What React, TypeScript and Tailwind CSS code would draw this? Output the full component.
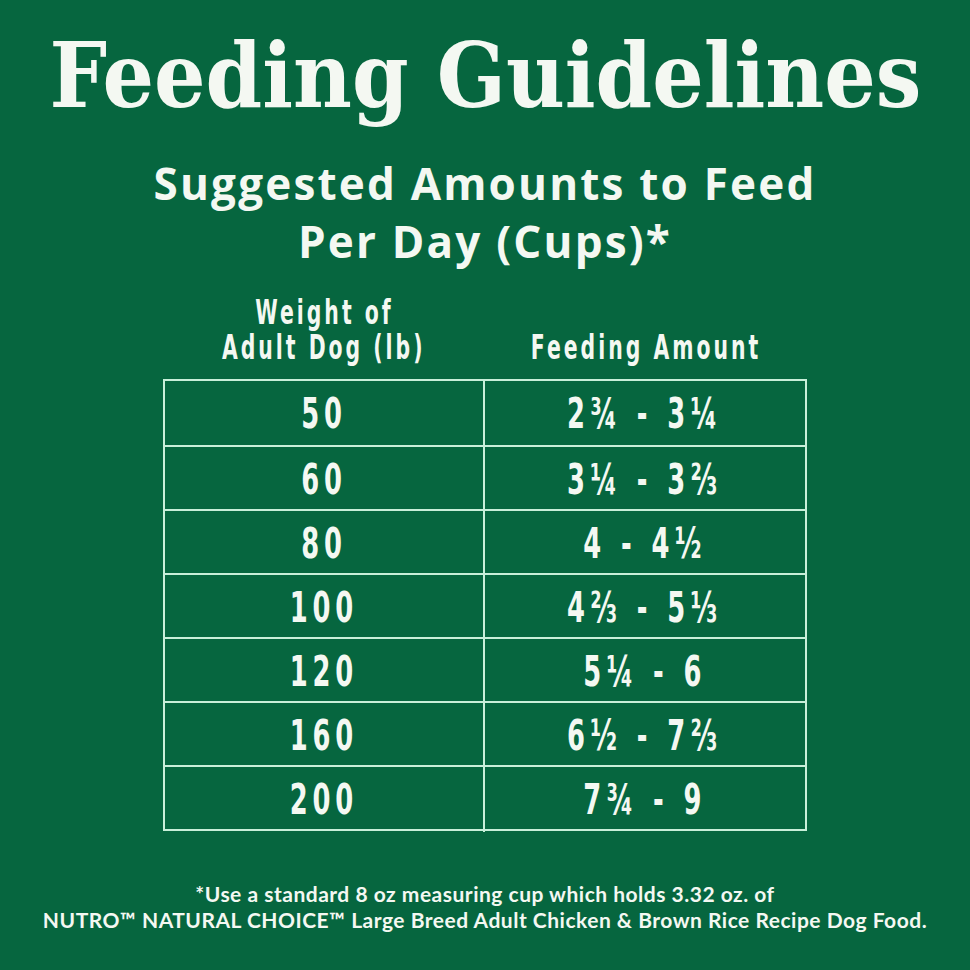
const ROWS: [string, string][] = [
  ['50', '2¾ - 3¼'],
  ['60', '3¼ - 3⅔'],
  ['80', '4 - 4½'],
  ['100', '4⅔ - 5⅓'],
  ['120', '5¼ - 6'],
  ['160', '6½ - 7⅔'],
  ['200', '7¾ - 9'],
];

// no condensed face is installed, so squeeze DejaVu Sans Bold horizontally
function Narrow({ children }: { children: React.ReactNode }) {
  return <span className="inline-block shrink-0 origin-center scale-x-[0.6] whitespace-pre">{children}</span>;
}

export default function App() {
  return (
    <div className="w-[970px] h-[970px] bg-[#06663f] text-[#f4f8f2] flex flex-col items-center overflow-hidden">
      <h1 className='mt-[20px] font-["DejaVu_Serif",serif] font-bold text-[90px] leading-[110px] whitespace-nowrap'>
        <span className="inline-block origin-center scale-x-[0.9]">Feeding Guidelines</span>
      </h1>
      <h2 className='mt-[24px] font-["Open_Sans",sans-serif] font-bold text-[44px] leading-[58px] tracking-[2.2px] text-center'>
        Suggested Amounts to Feed
        <br />
        Per Day (Cups)*
      </h2>

      <div className='font-["DejaVu_Sans",sans-serif] font-bold mt-[25px] w-[644px]'>
        <div className="grid grid-cols-[322px_322px] items-end pb-[14px] text-[34px] leading-[35px] tracking-[5px]">
          <div className="flex flex-col items-center">
            <Narrow>Weight of</Narrow>
            <Narrow>Adult Dog (lb)</Narrow>
          </div>
          <div className="flex flex-col items-center">
            <Narrow>Feeding Amount</Narrow>
          </div>
        </div>
        <div className="border-2 border-[#c8efd9]">
          {ROWS.map(([w, amt], i) => (
            <div
              key={w}
              className={`grid grid-cols-[320px_1fr] text-[43px] tracking-[8px] h-[64px] ${i > 0 ? 'border-t-2 border-[#c8efd9]' : ''}`}
            >
              <div className="flex items-center justify-center border-r-2 border-[#c8efd9]">
                <Narrow>{w}</Narrow>
              </div>
              <div className="flex items-center justify-center tracking-[9px]">
                <Narrow>{amt}</Narrow>
              </div>
            </div>
          ))}
        </div>
      </div>

      <p className='mt-[50px] font-["Lato",sans-serif] font-bold text-[21px] leading-[26px] tracking-[0.5px] text-center whitespace-nowrap'>
        *Use a standard 8 oz measuring cup which holds 3.32 oz. of
        <br />
        NUTRO™ NATURAL CHOICE™ Large Breed Adult Chicken &amp; Brown Rice Recipe Dog Food.
      </p>
    </div>
  );
}
